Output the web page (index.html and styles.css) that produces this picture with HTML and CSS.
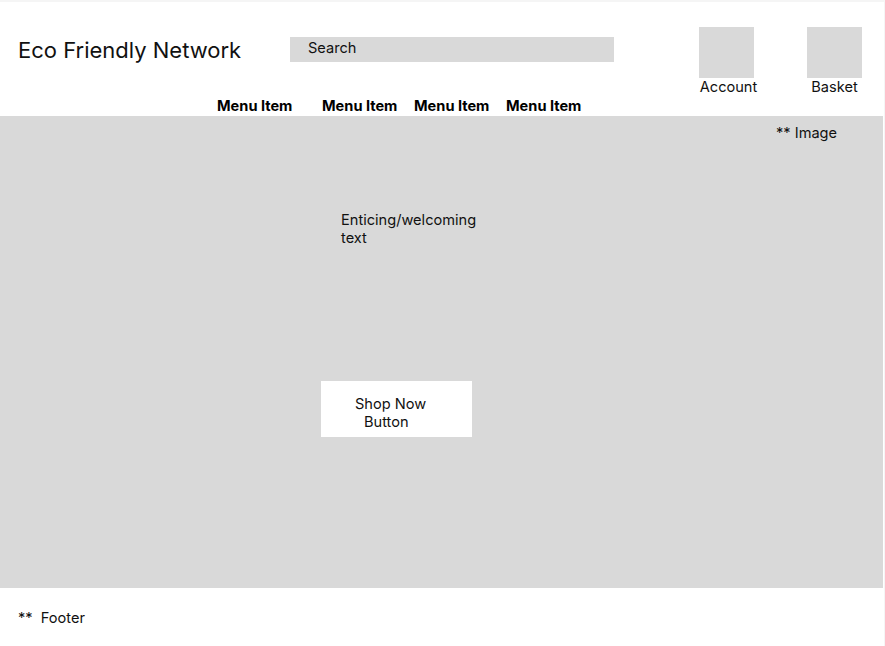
FILE: index.html
```html
<!DOCTYPE html>
<html lang="en">
<head>
<meta charset="utf-8">
<title>Eco Friendly Network</title>
<link rel="stylesheet" href="styles.css">
</head>
<body>
<div class="frame">
  <header class="header">
    <div class="top">
      <div class="brand">Eco Friendly Network</div>
      <div class="search">Search</div>
      <div class="actions">
        <div class="action"><div class="icon-box"></div><span>Account</span></div>
        <div class="action"><div class="icon-box"></div><span>Basket</span></div>
      </div>
    </div>
    <nav class="nav">
      <span class="nav-item first">Menu Item</span>
      <span class="nav-item">Menu Item</span>
      <span class="nav-item">Menu Item</span>
      <span class="nav-item">Menu Item</span>
    </nav>
  </header>
  <section class="hero">
    <div class="img-note">** Image</div>
    <div class="welcome">Enticing/welcoming text</div>
    <div class="cta"><span class="l1">Shop Now</span><span class="l2">Button</span></div>
  </section>
  <footer class="footer">**&nbsp;&nbsp;Footer</footer>
</div>
</body>
</html>
```
FILE: styles.css
```css
html, body {
  margin: 0;
  padding: 0;
}
body {
  background: #f5f5f5;
  font-family: Inter, "Noto Sans", "Liberation Sans", sans-serif;
  color: #000;
  font-size: 14.6px;
  line-height: 17px;
}
.frame {
  width: 884px;
  margin-top: 2px;
  background: #fff;
}
.header {
  height: 114px;
  display: flex;
  flex-direction: column;
}
.top {
  display: flex;
  align-items: flex-start;
  padding: 25px 0 0 18px;
}
.brand {
  margin-top: 11px;
  width: 272px;
  font-size: 22px;
  line-height: 25px;
  color: #111;
}
.search {
  margin-top: 10px;
  width: 324px;
  height: 25px;
  box-sizing: border-box;
  background: #d9d9d9;
  padding-left: 18px;
  line-height: 22px;
  color: #111;
}
.actions {
  display: flex;
  gap: 53px;
  margin-left: 85px;
}
.action {
  width: 55px;
  display: flex;
  flex-direction: column;
  align-items: center;
}
.icon-box {
  width: 55px;
  height: 51px;
  background: #d9d9d9;
}
.action span {
  white-space: nowrap;
  margin-top: 1px;
  color: #111;
}
.action:first-child span {
  margin-left: 4px;
}
.nav {
  display: flex;
  padding-left: 217px;
  margin-top: 2px;
  font-weight: 700;
  gap: 16px;
}
.nav-item {
  width: 76px;
  white-space: nowrap;
}
.nav-item.first {
  margin-right: 13px;
}
.hero {
  width: 883px;
  height: 472px;
  box-sizing: border-box;
  background: #d9d9d9;
  padding-top: 9px;
  color: #111;
}
.img-note {
  margin-left: 776px;
}
.welcome {
  margin: 69px 0 0 341px;
  width: 150px;
  line-height: 18px;
}
.cta {
  margin: 134px 0 0 321px;
  width: 151px;
  height: 56px;
  box-sizing: border-box;
  background: #fff;
  padding: 14px 0 0 34px;
  line-height: 18px;
}
.cta span {
  display: block;
}
.cta .l2 {
  margin-left: 9px;
}
.footer {
  height: 58px;
  box-sizing: border-box;
  padding: 22px 0 0 18px;
  color: #111;
}
```
